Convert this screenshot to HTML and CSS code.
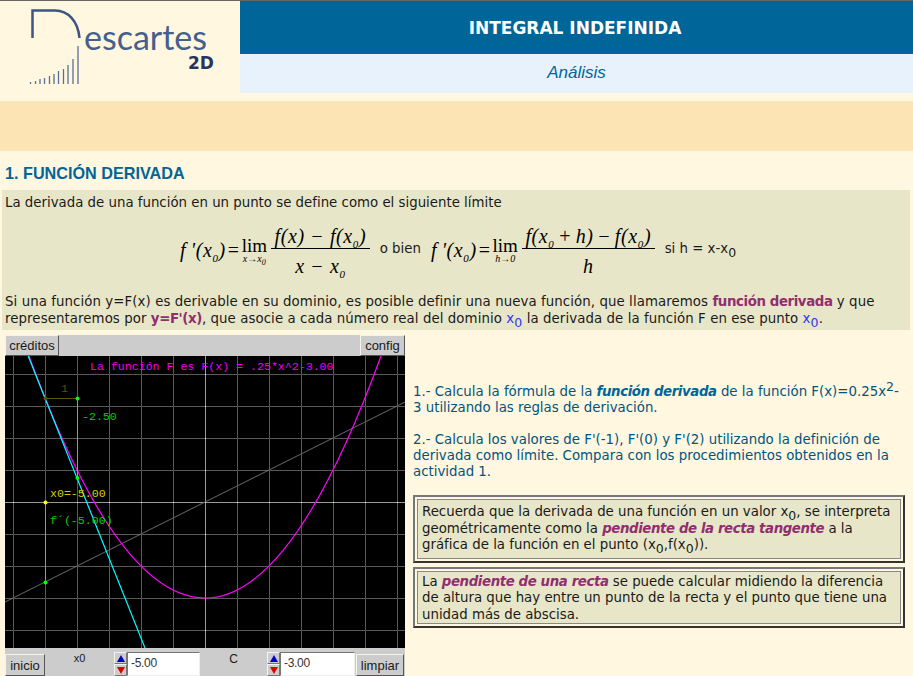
FILE: index.html
```html
<!DOCTYPE html>
<html lang="es">
<head>
    <meta charset="UTF-8">
    <meta name="viewport" content="width=device-width, initial-scale=1.0">
    <title>Integral indefinida</title>
    <link rel="stylesheet" href="styles.css">
</head>
<body>

    <header class="top">
        <div class="logo">
            <svg width="240" height="92" viewBox="0 0 240 92">
                <path class="logo-d" d="M32.500 37V9.500H55C68 9.500 78 20 79.500 37"/>
                <g class="logo-bars">
                    <path d="M30.500 81V83M35.500 80V83M40 78V83M44.500 77V83M49.500 75V83M54 73V83M58.500 70V83M63.500 68V83M68 64V83M73 58V83M78 45V83"/>
                </g>
                <text class="logo-name" x="84" y="49">escartes</text>
                <text class="logo-2d" x="188" y="68">2D</text>
            </svg>
        </div>
        <div class="banner">
            <h1>INTEGRAL INDEFINIDA</h1>
            <div class="subject">Análisis</div>
        </div>
    </header>

    <div class="band"></div>

    <h2>1. FUNCIÓN DERIVADA</h2>

    <section class="panel">
        <p>La derivada de una función en un punto se define como el siguiente límite</p>
        <div class="formula-row">
            <span class="math">
                <span>f&thinsp;'(x<sub>0</sub>)</span><span class="eq">=</span>
                <span class="lim">lim<small>x→x<sub>0</sub></small></span>
                <span class="frac"><span class="num">f(x) − f(x<sub>0</sub>)</span><span class="den">x − x<sub>0</sub></span></span>
            </span>
            <span class="word">o bien</span>
            <span class="math">
                <span>f&thinsp;'(x<sub>0</sub>)</span><span class="eq">=</span>
                <span class="lim">lim<small>h→0</small></span>
                <span class="frac frac-wide"><span class="num">f(x<sub>0</sub> + h) − f(x<sub>0</sub>)</span><span class="den">h</span></span>
            </span>
            <span class="word">si h = x-x<sub>0</sub></span>
        </div>
        <p class="tight">Si una función y=F(x) es derivable en su dominio, es posible definir una nueva función, que llamaremos <b class="hl">función derivada</b> y que representaremos por <b class="hl">y=F'(x)</b>, que asocie a cada número real del dominio <span class="var">x<sub>0</sub></span> la derivada de la función F en ese punto <span class="var">x<sub>0</sub></span>.</p>
    </section>

    <div class="lower">
        <div class="applet">
            <div class="applet-top">
                <button class="btn btn-creditos">créditos</button>
                <button class="btn btn-config">config</button>
            </div>
            <svg class="graph" width="400" height="292" viewBox="0 0 400 292">
                <defs>
                    <pattern id="cells" x="8" y="18" width="32" height="32" patternUnits="userSpaceOnUse">
                        <path d="M.5 32V.5H32" fill="none" stroke="#5a5a5a"/>
                    </pattern>
                </defs>
                <rect width="400" height="292" fill="#000"/>
                <rect width="400" height="292" fill="url(#cells)"/>
                <path d="M200.500 0V292M0 146.500H400" stroke="#9a9a9a" fill="none"/>
                <path d="M200.500 18V292" stroke="#e0e0e0" stroke-dasharray="1 31" fill="none"/>
                <path d="M8 146.500H400" stroke="#e0e0e0" stroke-dasharray="1 31" fill="none"/>
                <path d="M0 246L400 46" stroke="#6a6a6a" fill="none"/>
                <path d="M24 0Q200 484 376 0" stroke="#f0f" stroke-width="1.200" fill="none"/>
                <path d="M23.200 0L140 292" stroke="#0ff" stroke-width="1.200" fill="none"/>
                <path d="M40 42.500H72" stroke="#5c5200" fill="none"/>
                <path d="M72.500 42V122M40.500 146V226" stroke="#0f0" fill="none"/>
                <circle cx="40.500" cy="42.500" r="2" fill="#5c5200"/>
                <circle cx="72.500" cy="42.500" r="2" fill="#0f0"/>
                <circle cx="72.500" cy="122" r="2" fill="#0f0"/>
                <circle cx="40.500" cy="226.500" r="2" fill="#0f0"/>
                <circle cx="40.500" cy="146.500" r="2" fill="#ff0"/>
                <text class="t-mag" x="85" y="14">La función F es F(x) = .25*x^2-3.00</text>
                <text class="t-olive" x="56" y="36">1</text>
                <text class="t-green" x="77" y="64">-2.50</text>
                <text class="t-yellow" x="45" y="141">x0=-5.00</text>
                <text class="t-green" x="45" y="168">f´(-5.00)</text>
            </svg>
            <div class="applet-bottom">
                <button class="btn btn-inicio">inicio</button>
                <span class="param">x0</span>
                <span class="spinner"><i class="up"></i><i class="down"></i></span>
                <input class="field" type="text" value="-5.00">
                <span class="param param-c">C</span>
                <span class="spinner"><i class="up"></i><i class="down"></i></span>
                <input class="field field-c" type="text" value="-3.00">
                <button class="btn btn-limpiar">limpiar</button>
            </div>
        </div>

        <div class="side">
            <p>1.- Calcula la fórmula de la <b class="key">función derivada</b> de la función F(x)=0.25x<sup>2</sup>-3 utilizando las reglas de derivación.</p>
            <p class="last">2.- Calcula los valores de F'(-1), F'(0) y F'(2) utilizando la definición de derivada como límite. Compara con los procedimientos obtenidos en la actividad 1.</p>
            <div class="note note-sub"><div class="note-in">Recuerda que la derivada de una función en un valor x<sub>0</sub>, se interpreta geométricamente como la <b class="hl-it">pendiente de la recta tangente</b> a la gráfica de la función en el punto (x<sub>0</sub>,f(x<sub>0</sub>)).</div></div>
            <div class="note"><div class="note-in">La <b class="hl-it">pendiente de una recta</b> se puede calcular midiendo la diferencia de altura que hay entre un punto de la recta y el punto que tiene una unidad más de abscisa.</div></div>
        </div>
    </div>

</body>
</html>
```

FILE: styles.css
```css
html, body {
    height: 676px;
    overflow: hidden;
}

body {
    margin: 0;
    background-color: #fff7df;
    border-top: 1px solid #666666;
    box-sizing: border-box;
    font-family: "DejaVu Sans", Verdana, sans-serif;
    font-size: 13.33px;
    color: #1a1a1a;
}

.top {
    display: flex;
    height: 92px;
}

.logo {
    width: 240px;
    flex: none;
}

.logo svg {
    display: block;
}

.logo-d {
    fill: none;
    stroke: #3d5580;
    stroke-width: 2.500;
}

.logo-bars path {
    fill: none;
    stroke: #5a7099;
    stroke-width: 1.300;
}

.logo-name {
    font-family: Lato, sans-serif;
    font-size: 34px;
    fill: #45608c;
}

.logo-2d {
    font-family: "DejaVu Sans", sans-serif;
    font-weight: bold;
    font-size: 17px;
    fill: #28345f;
}

.banner {
    flex: 1;
    display: flex;
    flex-direction: column;
    text-align: center;
}

.banner h1 {
    margin: 0;
    height: 53px;
    padding-right: 3px;
    line-height: 54px;
    background-color: #006699;
    color: #ffffff;
    font-size: 17px;
    font-weight: bold;
}

.subject {
    flex: 1;
    line-height: 38px;
    background-color: #e8f2fc;
    color: #006699;
    font-family: "Liberation Sans", Arial, sans-serif;
    font-style: italic;
    font-size: 17px;
}

.band {
    height: 50px;
    margin-top: 8px;
    background-color: #fde4b5;
}

h2 {
    margin: 13px 0 0 5px;
    height: 26px;
    line-height: 18px;
    font-family: "Liberation Sans", Arial, sans-serif;
    font-size: 16.200px;
    color: #006699;
}

.panel {
    margin: 0 3px 0 2px;
    height: 140px;
    box-sizing: border-box;
    padding: 4px 3px 0;
    background-color: #e8e6c8;
}

.panel p {
    margin: 0;
    line-height: 17px;
}

.panel .tight {
    margin-top: 14px;
    letter-spacing: 0.080px;
}

sub,
sup {
    font-size: 12.500px;
    line-height: 0;
}

.formula-row {
    display: flex;
    align-items: center;
    gap: 10px;
    height: 64px;
    margin-top: 4px;
    padding-left: 175px;
}

.word {
    padding-top: 3px;
}

.math {
    display: flex;
    align-items: center;
    padding-top: 6px;
    font-family: "Liberation Serif", "Times New Roman", serif;
    font-style: italic;
    font-size: 20px;
    letter-spacing: 0.600px;
    color: #000000;
}

.math sub {
    font-size: 11px;
}

.eq {
    font-style: normal;
    margin: 0 2px;
}

.lim {
    display: flex;
    flex-direction: column;
    align-items: center;
    font-style: normal;
    font-size: 19px;
    letter-spacing: 0;
    line-height: 17px;
    margin-right: 4px;
}

.lim small {
    font-style: italic;
    font-size: 10px;
    line-height: 10px;
}

.lim sub {
    font-size: 8px;
}

.frac {
    display: flex;
    flex-direction: column;
    text-align: center;
    margin-top: 3px;
}

.frac-wide {
    word-spacing: -2px;
}

.num {
    padding: 0 3.500px;
    border-bottom: 1px solid #000000;
}

.den {
    padding-top: 6px;
}

.hl {
    color: #8f2f6e;
    letter-spacing: -0.400px;
}

.hl-it {
    color: #8f2f6e;
    letter-spacing: -0.400px;
    font-style: italic;
}

.key {
    color: #006699;
    letter-spacing: -0.400px;
    font-style: italic;
}

.var {
    color: #3333ee;
}

.lower {
    display: flex;
    margin-top: 5px;
}

.applet {
    width: 400px;
    flex: none;
    margin-left: 5px;
    background-color: #cccccc;
}

.applet-top {
    display: flex;
    justify-content: space-between;
    height: 21px;
}

.graph {
    display: block;
}

.graph text {
    font-family: "Liberation Mono", "Courier New", monospace;
    font-size: 11.600px;
}

.t-mag {
    fill: #ee00ee;
}

.t-olive {
    fill: #5c5200;
}

.t-green {
    fill: #00d000;
}

.t-yellow {
    fill: #d0d000;
}

.btn {
    padding: 0;
    border: 1px solid;
    border-color: #f4f4e8 #555555 #555555 #f4f4e8;
    background-color: #cccccc;
    color: #1a1a1a;
    font-family: "Liberation Sans", Arial, sans-serif;
    font-size: 13px;
}

.btn-creditos {
    width: 54px;
}

.btn-config {
    width: 45px;
}

.btn-inicio {
    width: 40px;
}

.btn-limpiar {
    width: 48px;
}

.applet-bottom {
    display: flex;
    align-items: flex-end;
    height: 28px;
    font-family: "Liberation Sans", Arial, sans-serif;
    font-size: 11px;
}

.applet-bottom .btn {
    height: 22px;
}

.param {
    align-self: flex-start;
    width: 69px;
    padding-top: 4px;
    text-align: center;
}

.param-c {
    width: 67px;
    font-size: 12px;
}

.spinner {
    display: flex;
    flex-direction: column;
    width: 13px;
    height: 24px;
    flex: none;
}

.spinner i {
    flex: 1;
    border: 1px solid;
    border-color: #f4f4f4 #777777 #777777 #f4f4f4;
    display: flex;
    align-items: center;
    justify-content: center;
}

.up::before {
    content: "";
    border: 4px solid transparent;
    border-top: 0;
    border-bottom: 7px solid #0000c8;
}

.down::before {
    content: "";
    border: 4px solid transparent;
    border-bottom: 0;
    border-top: 7px solid #e00000;
}

.field {
    width: 73px;
    height: 24px;
    box-sizing: border-box;
    padding: 0 0 2px 3px;
    border: 1px solid;
    border-color: #777777 #eeeeee #eeeeee #777777;
    border-radius: 0;
    font-family: "Liberation Sans", Arial, sans-serif;
    font-size: 12px;
    letter-spacing: -0.300px;
    color: #333333;
}

.field-c {
    width: 75px;
    margin-right: 1px;
}

.side {
    flex: 1;
    padding: 49px 8px 0 8px;
    line-height: 16px;
    color: #00557f;
}

.side p {
    margin: 0 0 16px;
}

.side .last {
    margin-bottom: 15px;
}

.note {
    margin-bottom: 4px;
    padding: 2px;
    border: 2px solid;
    border-color: #777777 #333333 #333333 #777777;
    color: #1a1a1a;
}

.note-in {
    padding: 2px 3px 0 4px;
    line-height: 16.500px;
    border: 1px solid #888888;
    background-color: #e8e6c8;
}

.note-sub .note-in {
    padding: 4px 3px 4px 4px;
}
```
